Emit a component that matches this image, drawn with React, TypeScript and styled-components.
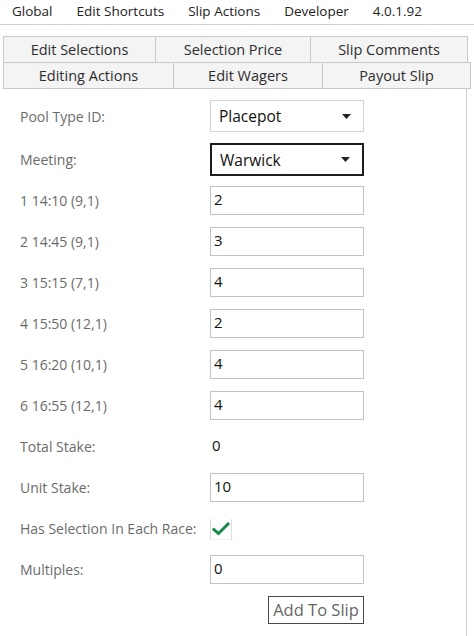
import styled, { createGlobalStyle } from "styled-components";

const GlobalStyle = createGlobalStyle`
  html, body {
    margin: 0;
    padding: 0;
    background: #ffffff;
  }
  body {
    font-family: "Open Sans", "Noto Sans", "Liberation Sans", sans-serif;
  }
`;

const menuItems = ["Global", "Edit Shortcuts", "Slip Actions", "Developer", "4.0.1.92"];

const tabRows = [
  { cols: "152px 155px 157px", tabs: ["Edit Selections", "Selection Price", "Slip Comments"] },
  { cols: "170px 149px 148px", tabs: ["Editing Actions", "Edit Wagers", "Payout Slip"] },
];

const races = [
  { label: "1 14:10 (9,1)", value: "2" },
  { label: "2 14:45 (9,1)", value: "3" },
  { label: "3 15:15 (7,1)", value: "4" },
  { label: "4 15:50 (12,1)", value: "2" },
  { label: "5 16:20 (10,1)", value: "4" },
  { label: "6 16:55 (12,1)", value: "4" },
];

const Arrow = () => (
  <svg width="9" height="5" viewBox="0 0 9 5">
    <path d="M0 0 L9 0 L4.5 5 Z" fill="#222" />
  </svg>
);

const App = () => {
  return (
    <>
      <GlobalStyle />
      <Page>
        <MenuBar>
          {menuItems.map((item) => (
            <MenuItem key={item}>{item}</MenuItem>
          ))}
        </MenuBar>

        <TabArea>
          {tabRows.map((row, i) => (
            <TabRow key={i} $cols={row.cols} $last={i === tabRows.length - 1}>
              {row.tabs.map((t) => (
                <Tab key={t}>{t}</Tab>
              ))}
            </TabRow>
          ))}
        </TabArea>

        <Panel>
          <Row $height={32} $after={11}>
            <Label>Pool Type ID:</Label>
            <Select>
              <span>Placepot</span>
              <Arrow />
            </Select>
          </Row>

          <Row $height={33} $after={10}>
            <Label>Meeting:</Label>
            <Select $focused>
              <span>Warwick</span>
              <Arrow />
            </Select>
          </Row>

          {races.map((r) => (
            <Row key={r.label} $height={29} $after={12}>
              <Label>{r.label}</Label>
              <TextBox readOnly defaultValue={r.value} />
            </Row>
          ))}

          <Row $height={29} $after={12}>
            <Label>Total Stake:</Label>
            <Value>0</Value>
          </Row>

          <Row $height={29} $after={12}>
            <Label>Unit Stake:</Label>
            <TextBox readOnly defaultValue="10" />
          </Row>

          <Row $height={29} $after={12}>
            <Label>Has Selection In Each Race:</Label>
            <CheckBox>
              <svg width="18" height="14" viewBox="0 0 18 14">
                <path
                  d="M2 7.5 L6.5 11.5 L16 2"
                  fill="none"
                  stroke="#17884a"
                  strokeWidth="3"
                  strokeLinecap="square"
                />
              </svg>
            </CheckBox>
          </Row>

          <Row $height={29} $after={12}>
            <Label>Multiples:</Label>
            <TextBox readOnly defaultValue="0" />
          </Row>

          <ButtonRow>
            <Button>Add To Slip</Button>
          </ButtonRow>
        </Panel>
      </Page>
    </>
  );
};

export default App;

const Page = styled.div`
  width: 474px;
  height: 636px;
  overflow: hidden;
  background: #fff;
`;

const MenuBar = styled.div`
  display: flex;
  align-items: center;
  gap: 24px;
  height: 25px;
  padding-left: 12px;
  border-bottom: 1px solid #cfcfcf;
  box-sizing: border-box;
`;

const MenuItem = styled.span`
  font-size: 13.5px;
  color: #222;
  padding-bottom: 2px;
`;

const TabArea = styled.div`
  margin-top: 11px;
  padding-left: 3px;
`;

const TabRow = styled.div<{ $cols: string; $last: boolean }>`
  display: grid;
  grid-template-columns: ${({ $cols }) => $cols};
  width: max-content;
  border-left: 1px solid #c9c9c9;
  border-bottom: ${({ $last }) => ($last ? "1px solid #c9c9c9" : "none")};
`;

const Tab = styled.div`
  height: 25px;
  display: flex;
  align-items: center;
  justify-content: center;
  border-top: 1px solid #c9c9c9;
  border-right: 1px solid #c9c9c9;
  background: #f4f4f4;
  font-size: 14.5px;
  color: #2e2e2e;
`;

const Panel = styled.div`
  margin-left: 3px;
  width: 464px;
  height: 560px;
  box-sizing: border-box;
  border-right: 1px solid #cfcfcf;
  padding: 11px 0 0 17px;
`;

const Row = styled.div<{ $height: number; $after: number }>`
  display: flex;
  align-items: center;
  height: ${({ $height }) => $height}px;
  margin-bottom: ${({ $after }) => $after}px;
`;

const Label = styled.span`
  width: 190px;
  font-size: 14px;
  color: #6b6b6b;
`;

const Select = styled.div<{ $focused?: boolean }>`
  width: 154px;
  height: 100%;
  box-sizing: border-box;
  display: flex;
  align-items: center;
  justify-content: space-between;
  padding: 0 12px 0 8px;
  background: #fff;
  border: ${({ $focused }) => ($focused ? "2px solid #1e1e1e" : "1px solid #d2d2d2")};
  font-size: 15.5px;
  color: #111;
`;

const TextBox = styled.input`
  width: 154px;
  height: 29px;
  box-sizing: border-box;
  border: 1px solid #c2c2c2;
  padding: 0 3px 3px;
  margin: 0;
  font-family: inherit;
  font-size: 15px;
  color: #111;
  background: #fff;
  outline: none;
`;

const Value = styled.span`
  padding: 0 0 4px 2px;
  font-size: 15px;
  color: #111;
`;

const CheckBox = styled.div`
  width: 22px;
  height: 21px;
  margin-top: 2px;
  box-sizing: border-box;
  display: flex;
  align-items: center;
  justify-content: center;
  border: 1px solid #dcdcdc;
  border-top: none;
  border-bottom-color: #f0f0f0;
`;

const ButtonRow = styled.div`
  display: flex;
  justify-content: flex-end;
  width: 344px;
`;

const Button = styled.button`
  width: 96px;
  height: 28px;
  padding: 0 0 2px;
  background: #fff;
  border: 1px solid #4a4a4a;
  border-radius: 0;
  font-family: inherit;
  font-size: 16.5px;
  color: #666;
`;
